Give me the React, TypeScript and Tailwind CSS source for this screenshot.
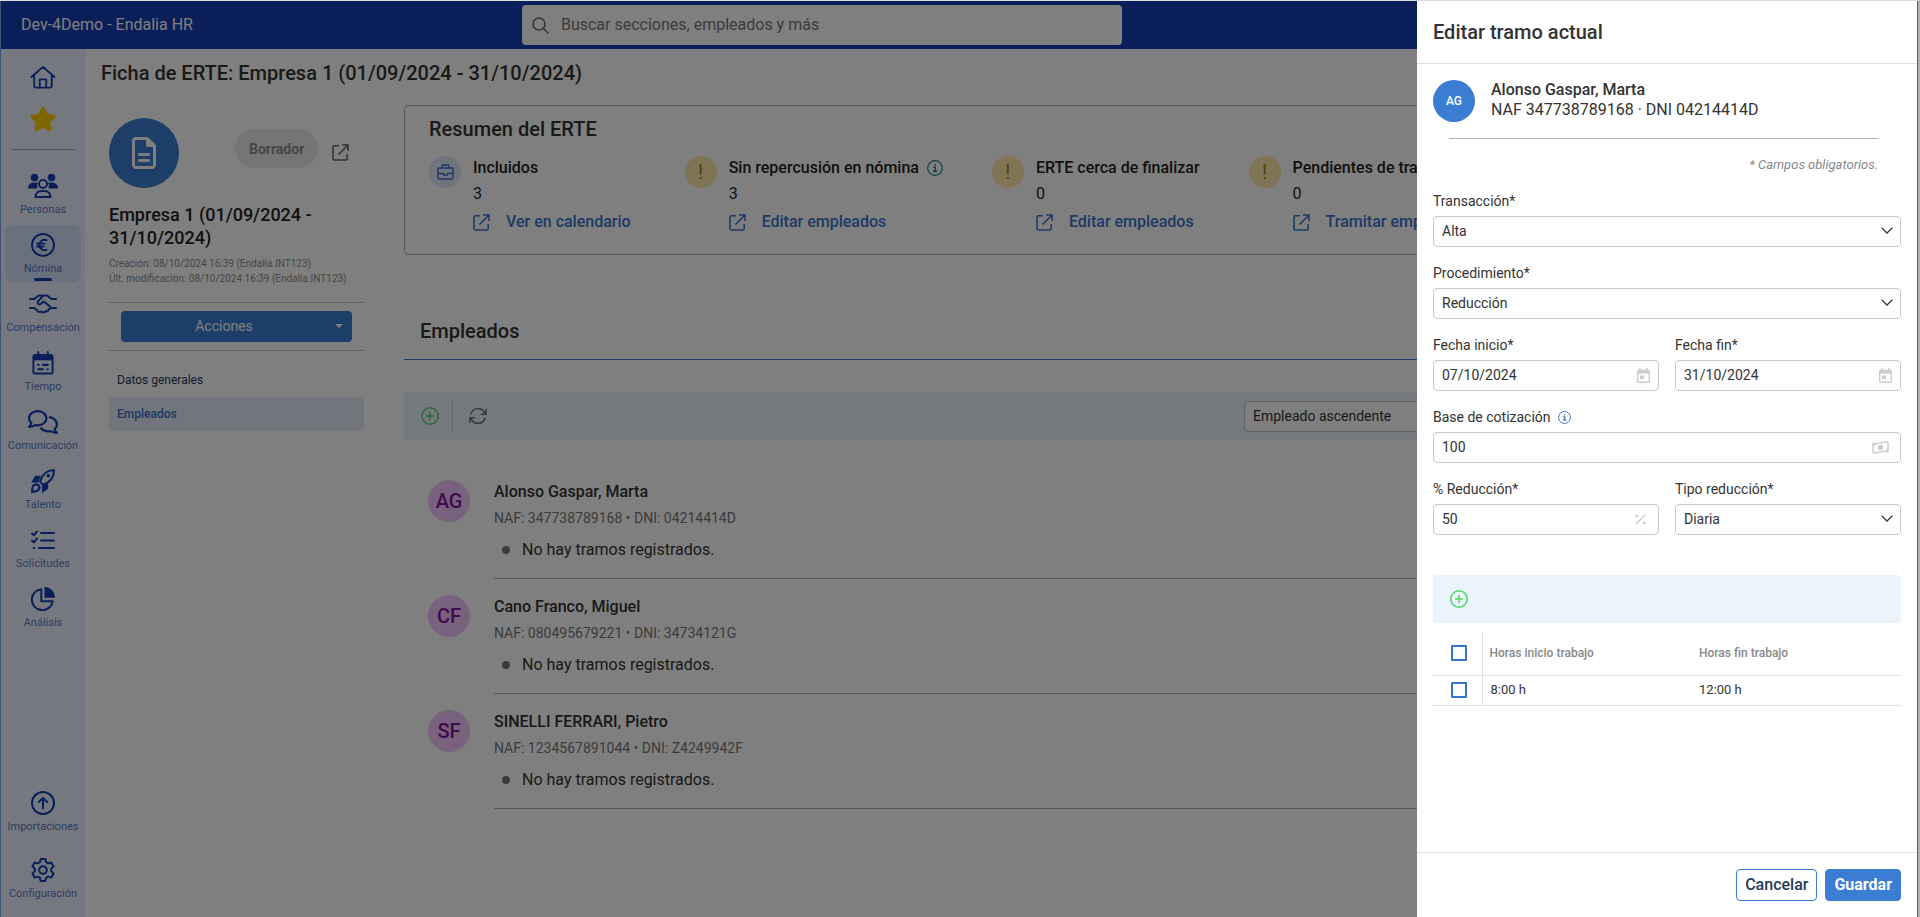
import React from "react"
import { FaRegComments, FaRegFileLines, FaStar } from "react-icons/fa6"

type IconProps = { className?: string }

const HomeIcon = ({ className }: IconProps) => (
  <svg viewBox="0 0 28 26" fill="none" stroke="currentColor" strokeWidth="2" strokeLinecap="round" strokeLinejoin="round" className={className}>
    <path d="M1.500 13 14 2l12.500 11M4.500 11v11.500a2 2 0 0 0 2 2h15a2 2 0 0 0 2-2V11M10.500 24v-8.500h7V24" />
  </svg>
)

const PeopleIcon = ({ className }: IconProps) => (
  <svg viewBox="0 0 30 26" fill="currentColor" className={className}>
    <circle cx="6.500" cy="4.500" r="3.800" />
    <circle cx="23.500" cy="4.500" r="3.800" />
    <path d="M0 15.500C0 12 2.500 9.500 6 9.500h4a6 6 0 0 0-.500 6zM30 15.500c0-3.500-2.500-6-6-6h-4a6 6 0 0 1 .500 6z" />
    <circle cx="15" cy="11" r="4" fill="none" stroke="currentColor" strokeWidth="2" />
    <path d="M7.500 24c0-3.500 2.500-6 6-6h3c3.500 0 6 2.500 6 6z" fill="none" stroke="currentColor" strokeWidth="2.200" strokeLinejoin="round" />
  </svg>
)

const EuroIcon = ({ className }: IconProps) => (
  <svg viewBox="0 0 24 24" fill="none" stroke="currentColor" strokeWidth="1.900" strokeLinecap="round" className={className}>
    <circle cx="12" cy="12" r="11" />
    <path d="M15.500 7.200C11.500 5.800 8.300 8.300 8.300 12s3.200 6.200 7.200 4.800M6 10.600h7.500M6 13.500h6.500" />
  </svg>
)

const HandshakeIcon = ({ className }: IconProps) => (
  <svg viewBox="0 0 28 20" fill="none" stroke="currentColor" strokeWidth="2" strokeLinecap="round" strokeLinejoin="round" className={className}>
    <path d="M1 5h4.500l3-2.800c.600-.500 1.200-.700 2-.700h2.500M27 5h-4.500l-3.700-3c-.500-.400-1-.500-1.600-.500h-1.700c-.800 0-1.500.300-2 .800L9 7.500c-1.200 1.800 1 3.800 2.800 2.400l3-2.400 6.200 5c1.200 1 .500 3-1.500 2.700.300 1.800-1.500 2.800-3 1.800-.700 1.700-3 1.800-4.300.500-1 .900-2.700.600-3.500-.500L5.500 14H1M27 14h-5.500" />
  </svg>
)

const CalendarIcon = ({ className }: IconProps) => (
  <svg viewBox="0 0 22 25" className={className}>
    <path d="M6 1v4M16 1v4" stroke="currentColor" strokeWidth="2" strokeLinecap="round" />
    <path d="M3 4h16a2 2 0 0 1 2 2v15.500a2 2 0 0 1-2 2H3a2 2 0 0 1-2-2V6a2 2 0 0 1 2-2z" fill="none" stroke="currentColor" strokeWidth="2" />
    <path d="M1 4.500h20v5.200H1z" fill="currentColor" />
    <path d="M6 14.500h.400M11 14.500h5M6 19h5M15.600 19h.400" stroke="currentColor" strokeWidth="2.200" strokeLinecap="round" />
  </svg>
)

const RocketIcon = ({ className }: IconProps) => (
  <svg viewBox="0 0 24 24" className={className}>
    <path d="M9 12.500C11 6 15.500 1.200 23 1c.200 7-4 12.300-11 14.800z" fill="none" stroke="currentColor" strokeWidth="2" strokeLinejoin="round" />
    <circle cx="17.300" cy="6.800" r="1.800" fill="currentColor" />
    <path d="M9.800 6.800H5.500c-.800 0-1.500.400-1.900 1L.300 13.500h7zM17.200 14.200v4.300c0 .800-.400 1.500-1 1.900L11 24v-7.500z" fill="currentColor" />
    <path d="M1.200 22.800c0-3 .100-5.200 1.500-6.500 1.400-1.400 3.500-1.300 4.700-.100s1.300 3.200-.100 4.700c-1.300 1.400-3.300 1.800-6.100 1.900z" fill="none" stroke="currentColor" strokeWidth="2.200" />
  </svg>
)

const TasksIcon = ({ className }: IconProps) => (
  <svg viewBox="0 0 24 20" fill="none" stroke="currentColor" strokeWidth="2" strokeLinecap="round" strokeLinejoin="round" className={className}>
    <path d="m1 3.500 1.800 1.800L6 1.500M1 10.500l1.800 1.800L6 8.500M10 3h13M10 10.500h13M8 18h15M2.700 18h.500" />
  </svg>
)

const PieIcon = ({ className }: IconProps) => (
  <svg viewBox="0 0 24 24" className={className}>
    <path d="M13.500 0A10.500 10.500 0 0 1 24 10.800H13.500z" fill="currentColor" />
    <path d="M10.300 2.200A10.500 10.500 0 1 0 21.700 14.300H10.300z" fill="none" stroke="currentColor" strokeWidth="2" strokeLinejoin="round" />
  </svg>
)

const UploadIcon = ({ className }: IconProps) => (
  <svg viewBox="0 0 24 24" fill="none" stroke="currentColor" strokeWidth="2" strokeLinecap="round" strokeLinejoin="round" className={className}>
    <circle cx="12" cy="12" r="11" />
    <path d="M12 17.500v-10M7.800 11 12 7l4.200 4" />
  </svg>
)

const GearIcon = ({ className }: IconProps) => (
  <svg viewBox="0 0 24 24" fill="none" stroke="currentColor" strokeWidth="2" strokeLinejoin="round" className={className}>
    <path d="M9.700 1h4.600l.800 3.200 2 1.200 3.200-1 2.300 4-2.400 2.300v2.600l2.400 2.300-2.300 4-3.200-1-2 1.200-.800 3.200H9.700l-.800-3.200-2-1.200-3.200 1-2.300-4 2.400-2.300v-2.600L1.400 8.400l2.300-4 3.200 1 2-1.200z" />
    <circle cx="12" cy="12" r="3.800" />
  </svg>
)

const ExternalIcon = ({ className }: IconProps) => (
  <svg viewBox="0 0 17 17" fill="none" stroke="currentColor" strokeWidth="1.600" className={className}>
    <path d="M7 1.800H2.500A1.500 1.500 0 0 0 1 3.300v11.200A1.500 1.500 0 0 0 2.500 16h11.200a1.500 1.500 0 0 0 1.500-1.500V10M10 1h6v6M16 1 6.500 10.500" />
  </svg>
)

const BriefcaseIcon = ({ className }: IconProps) => (
  <svg viewBox="0 0 17 16" fill="none" stroke="currentColor" strokeWidth="1.400" strokeLinejoin="round" className={className}>
    <path d="M2 4h13a1 1 0 0 1 1 1v9a1 1 0 0 1-1 1H2a1 1 0 0 1-1-1V5a1 1 0 0 1 1-1zM5.200 4V1.800a.800.800 0 0 1 .800-.800h5a.800.800 0 0 1 .800.800V4M1 9.500h5.500v1.500h4V9.500H16" />
  </svg>
)

const InfoIcon = ({ className }: IconProps) => (
  <svg viewBox="0 0 16 16" fill="none" stroke="currentColor" strokeWidth="1.200" className={className}>
    <circle cx="8" cy="8" r="7.300" />
    <path d="M6.300 7.300h2v4M6 11.300h4.200M7.400 4.700h1.400" strokeWidth="1.400" />
  </svg>
)

const PlusCircleIcon = ({ className }: IconProps) => (
  <svg viewBox="0 0 18 18" fill="none" stroke="currentColor" strokeWidth="1.500" className={className}>
    <circle cx="9" cy="9" r="8.200" />
    <path d="M9 5v8M5 9h8" />
  </svg>
)

const RefreshIcon = ({ className }: IconProps) => (
  <svg viewBox="0 0 18 18" fill="none" stroke="currentColor" strokeWidth="1.600" className={className}>
    <path d="M1.800 7.500A7.400 7.400 0 0 1 15.500 5.500l1 1.500M16.200 10.500A7.400 7.400 0 0 1 2.500 12.500l-1-1.500M17 2v5.200h-5.200M1 16v-5.200h5.200" />
  </svg>
)

const SearchIcon = ({ className }: IconProps) => (
  <svg viewBox="0 0 17 17" fill="none" stroke="currentColor" strokeWidth="1.500" strokeLinecap="round" className={className}>
    <circle cx="7" cy="7" r="6" />
    <path d="m11.300 11.300 4.700 4.700" />
  </svg>
)

const ChevronIcon = ({ className }: IconProps) => (
  <svg viewBox="0 0 12 7" fill="none" stroke="currentColor" strokeWidth="1.300" className={className}>
    <path d="m.5.600 5.500 5.400L11.500.600" />
  </svg>
)

const DateIcon = ({ className }: IconProps) => (
  <svg viewBox="0 0 13 15" className={className}>
    <path d="M3 0v3M10 0v3" stroke="currentColor" strokeWidth="1.600" />
    <path d="M1.500 2.500h10a.800.800 0 0 1 .800.800v10.200a.800.800 0 0 1-.800.800h-10a.800.800 0 0 1-.800-.800V3.300a.800.800 0 0 1 .800-.800z" fill="none" stroke="currentColor" strokeWidth="1.400" />
    <path d="M.7 2.500h11.600v3H.700zM3 7.500h4V11H3z" fill="currentColor" />
  </svg>
)

const MoneyIcon = ({ className }: IconProps) => (
  <svg viewBox="0 0 17 13" className={className}>
    <path d="M1 2.200c5 2 9.500-2.400 15-.800v9.400c-5-2-9.500 2.400-15 .800z" fill="none" stroke="currentColor" strokeWidth="1.500" strokeLinejoin="round" />
    <ellipse cx="8.500" cy="6.500" rx="2.500" ry="2.800" fill="currentColor" />
    <path d="M1 2v3c1.800 0 2.800-1 2.800-2.200zM16 11V8c-1.800 0-2.800 1-2.800 2.200z" fill="currentColor" />
  </svg>
)

const PercentIcon = ({ className }: IconProps) => (
  <svg viewBox="0 0 11 11" className={className}>
    <path d="m.800 10.200 9.400-9.400" stroke="currentColor" strokeWidth="1.500" />
    <circle cx="1.800" cy="1.900" r="1.500" fill="currentColor" />
    <circle cx="9.200" cy="9.100" r="1.500" fill="currentColor" />
  </svg>
)

const navItems = [
  { label: "Personas", icon: <PeopleIcon className="h-[26px] w-[30px]" /> },
  { label: "Nómina", icon: <EuroIcon className="size-6" />, active: true },
  { label: "Compensación", icon: <HandshakeIcon className="h-5 w-7" /> },
  { label: "Tiempo", icon: <CalendarIcon className="h-6 w-[22px]" /> },
  { label: "Comunicación", icon: <FaRegComments className="size-[30px]" /> },
  { label: "Talento", icon: <RocketIcon className="size-6" /> },
  { label: "Solicitudes", icon: <TasksIcon className="h-5 w-6" /> },
  { label: "Análisis", icon: <PieIcon className="size-6" /> },
]

const summary = [
  { title: "Incluidos", value: 3, link: "Ver en calendario", kind: "case" },
  { title: "Sin repercusión en nómina", value: 3, link: "Editar empleados", kind: "warn", info: true },
  { title: "ERTE cerca de finalizar", value: 0, link: "Editar empleados", kind: "warn" },
  { title: "Pendientes de tramitar", value: 0, link: "Tramitar empleados", kind: "warn" },
]

const employees = [
  { initials: "AG", name: "Alonso Gaspar, Marta", naf: "347738789168", dni: "04214414D" },
  { initials: "CF", name: "Cano Franco, Miguel", naf: "080495679221", dni: "34734121G" },
  { initials: "SF", name: "SINELLI FERRARI, Pietro", naf: "1234567891044", dni: "Z4249942F" },
]

function NavItem({ label, icon, active }: { label: string; icon: React.ReactNode; active?: boolean }) {
  return (
    <a
      href="#"
      className={`mx-1 flex h-[57px] flex-col items-center rounded-lg pt-1 ${active ? "bg-[#d2e3fa]" : ""}`}
    >
      <span className="flex h-8 items-center text-[#143cb4]">{icon}</span>
      <span className="text-[11px] leading-4 text-[#5b78c8]">{label}</span>
      {active && <span className="mt-px h-[3px] w-[18px] shrink-0 rounded-sm bg-[#143cb4]"></span>}
    </a>
  )
}

function Sidebar() {
  return (
    <nav className="flex w-[84px] shrink-0 flex-col bg-[#ebf3fe]">
      <a href="#" aria-label="Inicio" className="mt-4 flex justify-center text-[#143cb4]">
        <HomeIcon className="h-6 w-7" />
      </a>
      <a href="#" aria-label="Favoritos" className="mt-4 flex justify-center text-[#ffc800]">
        <FaStar className="size-7" />
      </a>
      <div className="mx-[10px] mt-4 h-px bg-[#8da9dc]"></div>
      <div className="mt-4 flex flex-col gap-[2px]">
        {navItems.map((item) => (
          <NavItem key={item.label} {...item} />
        ))}
      </div>
      <div className="mt-auto flex flex-col gap-[10px] pb-[10px]">
        <NavItem label="Importaciones" icon={<UploadIcon className="size-6" />} />
        <NavItem label="Configuración" icon={<GearIcon className="size-6" />} />
      </div>
    </nav>
  )
}

function Header() {
  return (
    <header className="relative flex h-12 shrink-0 items-center bg-[#143cb4] pl-5 text-white">
      <span>Dev-4Demo - Endalia HR</span>
      <label className="ml-[329px] flex h-10 w-[600px] items-center gap-3 rounded bg-white pl-[10px] text-[#666]">
        <SearchIcon className="size-[17px]" />
        <input
          type="search"
          aria-label="Buscar"
          placeholder="Buscar secciones, empleados y más"
          className="grow bg-transparent outline-none placeholder:text-[#777]"
        />
      </label>
    </header>
  )
}

function RecordCard() {
  return (
    <aside className="w-[255px] shrink-0 pt-[13px]">
      <div className="flex">
        <div className="flex size-[70px] items-center justify-center rounded-full bg-[#3a7dd2] text-white">
          <FaRegFileLines className="size-8" />
        </div>
        <span className="mt-[11px] ml-14 flex h-[39px] items-center rounded-full bg-[#eaeaea] px-[14px] text-sm font-bold text-[#8a8d91]">
          Borrador
        </span>
        <a href="#" aria-label="Abrir" className="mt-[26px] ml-[14px] text-[#666]">
          <ExternalIcon className="size-[17px]" />
        </a>
      </div>
      <h2 className="mt-[15px] text-lg leading-[23px] font-medium text-[#222]">Empresa 1 (01/09/2024 - 31/10/2024)</h2>
      <div className="mt-[7px] text-[10px] leading-[15px] text-[#8c8c8c]">
        <p>Creación: 08/10/2024 16:39 (Endalia.INT123)</p>
        <p>Últ. modificación: 08/10/2024 16:39 (Endalia.INT123)</p>
      </div>
      <div className="mt-4 border-y border-[#c0c0c0] px-3 py-2">
        <button className="flex h-[31px] w-full items-center rounded bg-[#3a7dd2] pb-px text-sm text-white">
          <span className="grow pr-2">Acciones</span>
          <span className="mr-[9px] border-x-4 border-t-4 border-x-transparent border-t-white"></span>
        </button>
      </div>
      <ul className="mt-3 text-xs">
        <li>
          <a href="#" className="flex h-[34px] items-center px-2 text-[#243c60]">Datos generales</a>
        </li>
        <li>
          <a href="#" className="flex h-[34px] items-center rounded bg-[#e4ebf7] px-2 font-medium text-[#3a6fc8]">Empleados</a>
        </li>
      </ul>
    </aside>
  )
}

function Summary() {
  return (
    <section className="overflow-hidden rounded border border-[#b0b0b0] pt-[11px] pb-[17px] pl-6">
      <h2 className="text-xl leading-6 font-medium text-[#333]">Resumen del ERTE</h2>
      <div className="mt-[14px] flex gap-[49px]">
        {summary.map((item) => (
          <div key={item.title} className="flex shrink-0 gap-3">
            {item.kind === "case" ? (
              <span className="mt-px flex size-8 items-center justify-center rounded-full bg-[#e0e9f8] text-[#3a6fc8]">
                <BriefcaseIcon className="h-4 w-[17px]" />
              </span>
            ) : (
              <span className="mt-px flex size-8 items-center justify-center rounded-full bg-[#ffeaa8] text-xl text-[#a8842a]">!</span>
            )}
            <div className="leading-[26px] text-[#222]">
              <h3 className="flex items-center gap-2 font-medium">
                {item.title}
                {item.info && <InfoIcon className="size-4 text-[#1f8090]" />}
              </h3>
              <p>{item.value}</p>
              <a href="#" className="flex h-[30px] items-center gap-4 pr-[5px] font-medium text-[#3a75cc]">
                <ExternalIcon className="size-[17px]" />
                {item.link}
              </a>
            </div>
          </div>
        ))}
      </div>
    </section>
  )
}

function Employees() {
  return (
    <section className="mt-16">
      <h2 className="border-b border-[#3a7dd2] pb-4 pl-4 text-xl leading-6 font-medium text-[#333]">Empleados</h2>
      <div className="mt-8 flex h-12 items-center rounded bg-[#ebf3fb] pl-[17px]">
        <button aria-label="Añadir" className="text-[#4cd964]">
          <PlusCircleIcon className="size-[18px]" />
        </button>
        <span className="mr-4 ml-[13px] h-8 w-px bg-[#c8c8c8]"></span>
        <button aria-label="Actualizar" className="text-[#777]">
          <RefreshIcon className="size-[18px]" />
        </button>
        <select
          aria-label="Orden"
          className="mr-4 ml-auto h-[31px] w-[625px] appearance-none rounded-sm border border-[#c4c4c4] bg-white pl-2 text-sm text-[#333]"
        >
          <option>Empleado ascendente</option>
        </select>
      </div>
      <ul className="mt-10 flex flex-col gap-4 pl-6">
        {employees.map((e) => (
          <li key={e.initials} className="flex gap-6">
            <span className="flex size-[42px] shrink-0 items-center justify-center rounded-full bg-[#f0c4fa] text-xl font-medium text-[#82149c]">
              {e.initials}
            </span>
            <div className="grow border-b border-[#b0b0b0] pb-4 text-[#333]">
              <h3 className="leading-6 font-medium">{e.name}</h3>
              <p className="mt-[3px] text-sm leading-[22px] text-[#777]">
                NAF: {e.naf} • DNI: {e.dni}
              </p>
              <p className="mt-[9px] flex items-center gap-3 pl-2 leading-6">
                <span className="size-2 rounded-full bg-[#777]"></span>
                No hay tramos registrados.
              </p>
            </div>
          </li>
        ))}
      </ul>
    </section>
  )
}

function SelectField({ id, label, value }: { id: string; label: string; value: string }) {
  return (
    <div className="relative flex flex-col gap-[5px] text-sm leading-5">
      <label htmlFor={id}>{label}</label>
      <select id={id} className="h-[31px] appearance-none rounded-sm border border-[#c8c8c8] bg-white px-2 pb-[2px] text-[#333]">
        <option>{value}</option>
      </select>
      <ChevronIcon className="pointer-events-none absolute right-2 bottom-[13px] h-[7px] w-3" />
    </div>
  )
}

type TextFieldProps = { id: string; label: string; value: string; icon: React.ReactNode; info?: boolean }

function TextField({ id, label, value, icon, info }: TextFieldProps) {
  return (
    <div className="flex flex-col gap-[5px] text-sm leading-5">
      <label htmlFor={id} className="flex items-center gap-[7px]">
        {label}
        {info && <InfoIcon className="size-[13px] text-[#3a6fc8]" />}
      </label>
      <div className="flex h-[31px] items-center rounded-sm border border-[#c8c8c8]">
        <input id={id} defaultValue={value} className="min-w-0 grow bg-transparent pb-[2px] pl-2 outline-none" />
        <span className="text-[#ccc]">{icon}</span>
      </div>
    </div>
  )
}

function Checkbox({ label }: { label: string }) {
  return (
    <input
      type="checkbox"
      aria-label={label}
      className="ml-[18px] block size-4 appearance-none rounded-[1px] border-2 border-[#3a73cc] bg-white"
    />
  )
}

function Drawer() {
  return (
    <div role="dialog" aria-label="Editar tramo actual" className="absolute inset-y-0 right-0 flex w-[500px] flex-col bg-white text-[#333]">
      <h2 className="flex h-[63px] shrink-0 items-center border-b border-[#dfe0e1] px-4 text-xl font-medium">
        Editar tramo actual
      </h2>
      <div className="grow px-4 pt-4">
        <div className="flex gap-4">
          <span className="flex size-[42px] items-center justify-center rounded-full bg-[#3a7dd2] text-xs font-medium text-white">
            AG
          </span>
          <div className="leading-5">
            <p className="font-medium">Alonso Gaspar, Marta</p>
            <p>NAF 347738789168 · DNI 04214414D</p>
          </div>
        </div>
        <div className="mt-4 mr-[23px] ml-4 border-t border-[#b0b0b0] py-4 text-right text-[13px] leading-5 text-[#888] italic">
          * Campos obligatorios.
        </div>
        <form className="flex flex-col gap-4">
          <SelectField id="transaccion" label="Transacción*" value="Alta" />
          <SelectField id="procedimiento" label="Procedimiento*" value="Reducción" />
          <div className="grid grid-cols-2 gap-4">
            <TextField id="inicio" label="Fecha inicio*" value="07/10/2024" icon={<DateIcon className="mr-2 h-[15px] w-[13px]" />} />
            <TextField id="fin" label="Fecha fin*" value="31/10/2024" icon={<DateIcon className="mr-2 h-[15px] w-[13px]" />} />
          </div>
          <TextField id="base" label="Base de cotización" value="100" info icon={<MoneyIcon className="mr-[11px] h-[13px] w-[17px]" />} />
          <div className="grid grid-cols-2 gap-4">
            <TextField id="porcentaje" label="% Reducción*" value="50" icon={<PercentIcon className="mr-3 size-[11px]" />} />
            <SelectField id="tipo" label="Tipo reducción*" value="Diaria" />
          </div>
        </form>
        <div className="mt-10 flex h-12 items-center rounded bg-[#ebf3fb] pl-[17px]">
          <button aria-label="Añadir horas" className="text-[#4cd964]">
            <PlusCircleIcon className="size-[18px]" />
          </button>
        </div>
        <table className="mt-2 w-full table-fixed text-left">
          <thead>
            <tr className="h-11 border-b border-[#dfe0e1] text-xs text-[#888]">
              <th className="w-[49px] border-r border-[#dfe0e1]"><Checkbox label="Seleccionar todo" /></th>
              <th className="w-[209px] pl-[7px] font-medium">Horas inicio trabajo</th>
              <th className="pl-2 font-medium">Horas fin trabajo</th>
            </tr>
          </thead>
          <tbody>
            <tr className="h-[30px] border-b border-[#dfe0e1] text-[13px]">
              <td className="border-r border-[#dfe0e1]"><Checkbox label="Seleccionar fila" /></td>
              <td className="pl-2">8:00 h</td>
              <td className="pl-2">12:00 h</td>
            </tr>
          </tbody>
        </table>
      </div>
      <footer className="flex justify-end gap-2 border-t border-[#dfe0e1] p-4">
        <button className="h-8 rounded border border-[#3a7dd2] bg-white px-2 font-medium text-[#243c58]">Cancelar</button>
        <button className="h-8 rounded border border-[#3a7dd2] bg-[#3a7dd2] px-2 font-bold text-white">Guardar</button>
      </footer>
    </div>
  )
}

export default function App() {
  return (
    <div className="h-screen border-t border-r-2 border-t-[#d8dede] border-r-[#adb4bd] font-[Roboto,sans-serif]">
      <div className="relative flex h-full flex-col overflow-hidden border-r border-l border-r-[#55606c] border-l-[#3c5274] bg-white">
        <Header />
        <div className="flex min-h-0 grow">
          <Sidebar />
          <main className="min-w-0 grow pt-3 pr-8 pl-4">
            <h1 className="text-xl leading-6 font-medium text-[#333]">Ficha de ERTE: Empresa 1 (01/09/2024 - 31/10/2024)</h1>
            <div className="mt-5 flex gap-10 pl-2">
              <RecordCard />
              <div className="min-w-0 grow">
                <Summary />
                <Employees />
              </div>
            </div>
          </main>
        </div>
        <div className="absolute inset-0 bg-black/50"></div>
        <Drawer />
      </div>
    </div>
  )
}
